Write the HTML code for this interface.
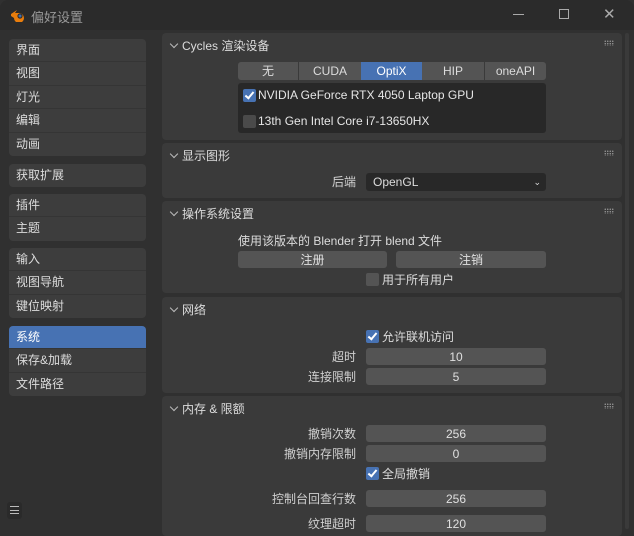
<!DOCTYPE html>
<html><head><meta charset="utf-8"><style>
*{box-sizing:border-box;margin:0;padding:0}
body{width:634px;height:529px;background:#303030;font-family:"Liberation Sans","Noto Sans CJK SC",sans-serif;font-size:12px;color:#dcdcdc;position:relative;overflow:hidden}
.a{position:absolute}
.tb{left:0;top:0;width:634px;height:30px;background:#2b2b2b;border-radius:8px 8px 0 0}
.grp{position:absolute;left:9px;width:137px;background:#3d3d3d;border-radius:4px;overflow:hidden}
.it{height:23.4px;line-height:23px;padding-left:7px;border-bottom:1px solid #353535;font-size:12px}
.it:last-child{border-bottom:none}
.sel{background:#4772b3;color:#fff}
.pn{position:absolute;left:162px;width:460px;background:#3a3a3a;border-radius:4px}
.ph{position:absolute;left:7px;top:4px;font-size:12px}
.ph:before{content:"";display:inline-block;width:5px;height:5px;border-right:1px solid #bbb;border-bottom:1px solid #bbb;transform:rotate(45deg);margin:0 5px 3px 2px}
.dots{position:absolute;right:8px;top:7px;width:10px;height:6px;background-image:radial-gradient(#999 0.6px,transparent 0.8px);background-size:2.5px 2.5px}
.fld{position:absolute;background:#545454;border-radius:3px;text-align:center;line-height:18px;height:17px;color:#e0e0e0}
.lbl{position:absolute;text-align:right;line-height:18px;color:#d0d0d0}
.cb{position:absolute;width:13px;height:13px;border-radius:2px;background:#545454}
.cb.on{background:#4772b3}
.cb.on:after{content:"";position:absolute;left:4px;top:1px;width:3px;height:7px;border-right:2px solid #fff;border-bottom:2px solid #fff;transform:rotate(40deg)}
</style></head><body>
<div class="a tb"></div>
<svg class="a" style="left:10px;top:8px" width="16" height="14" viewBox="0 0 16 14"><path d="M1 6 L7 2 L5 5 L9 5 A5 5 0 1 1 4 10 L1 8 Z" fill="#e87d0d"/><circle cx="10" cy="8" r="2.6" fill="#2b2b2b"/><circle cx="10" cy="8" r="1.5" fill="#3d6fb3"/></svg>
<div class="a" style="left:31px;top:7px;font-size:13px;color:#9a9a9a">偏好设置</div>
<div class="a" style="left:513px;top:14px;width:11px;height:1px;background:#aaa"></div>
<div class="a" style="left:559px;top:9px;width:10px;height:10px;border:1px solid #aaa"></div>
<div class="a" style="left:603px;top:8px;font-size:15px;color:#aaa;line-height:13px">✕</div>

<div class="grp" style="top:39px"><div class="it">界面</div><div class="it">视图</div><div class="it">灯光</div><div class="it">编辑</div><div class="it">动画</div></div>
<div class="grp" style="top:164px"><div class="it">获取扩展</div></div>
<div class="grp" style="top:194px"><div class="it">插件</div><div class="it">主题</div></div>
<div class="grp" style="top:248px"><div class="it">输入</div><div class="it">视图导航</div><div class="it">键位映射</div></div>
<div class="grp" style="top:326px"><div class="it sel">系统</div><div class="it">保存&amp;加载</div><div class="it">文件路径</div></div>
<div class="a" style="left:7px;top:502px;width:15px;height:17px;background:#2a2a2a;border-radius:3px"></div>
<div class="a" style="left:10px;top:506px;width:9px;height:8px;border-top:1px solid #bbb;border-bottom:1px solid #bbb"></div>
<div class="a" style="left:10px;top:510px;width:9px;height:1px;background:#bbb"></div>

<div class="a" style="left:625px;top:33px;width:4px;height:496px;background:#3a3a3a;border-radius:2px"></div>

<div class="pn" style="top:33px;height:107px"><div class="ph">Cycles 渲染设备</div><div class="dots"></div></div>
<div class="a" style="left:238px;top:62px;width:308px;height:18px;background:#545454;border-radius:3px"></div>
<div class="a" style="left:238px;top:62px;width:60px;line-height:18px;text-align:center">无</div>
<div class="a" style="left:298px;top:62px;width:1px;height:18px;background:#3a3a3a"></div>
<div class="a" style="left:299px;top:62px;width:62px;line-height:18px;text-align:center">CUDA</div>
<div class="a" style="left:361px;top:62px;width:61px;height:18px;background:#4772b3;color:#fff;line-height:18px;text-align:center">OptiX</div>
<div class="a" style="left:422px;top:62px;width:62px;line-height:18px;text-align:center">HIP</div>
<div class="a" style="left:484px;top:62px;width:1px;height:18px;background:#3a3a3a"></div>
<div class="a" style="left:485px;top:62px;width:61px;line-height:18px;text-align:center">oneAPI</div>
<div class="a" style="left:238px;top:83px;width:308px;height:50px;background:#282828;border-radius:3px"></div>
<div class="cb on" style="left:243px;top:89px"></div>
<div class="a" style="left:258px;top:88px;color:#e6e6e6">NVIDIA GeForce RTX 4050 Laptop GPU</div>
<div class="cb" style="left:243px;top:115px;background:#4a4a4a"></div>
<div class="a" style="left:258px;top:114px;color:#e6e6e6">13th Gen Intel Core i7-13650HX</div>

<div class="pn" style="top:143px;height:55px"><div class="ph">显示图形</div><div class="dots"></div></div>
<div class="lbl" style="left:300px;top:173px;width:56px">后端</div>
<div class="a" style="left:366px;top:173px;width:180px;height:18px;background:#282828;border-radius:3px;padding-left:7px;line-height:18px">OpenGL<span style="position:absolute;right:5px;top:0;font-size:9px">⌄</span></div>

<div class="pn" style="top:201px;height:92px"><div class="ph">操作系统设置</div><div class="dots"></div></div>
<div class="a" style="left:238px;top:232px">使用该版本的 Blender 打开 blend 文件</div>
<div class="fld" style="left:238px;top:251px;width:149px">注册</div>
<div class="fld" style="left:396px;top:251px;width:150px">注销</div>
<div class="cb" style="left:366px;top:273px"></div>
<div class="a" style="left:382px;top:271px">用于所有用户</div>

<div class="pn" style="top:297px;height:96px"><div class="ph">网络</div></div>
<div class="cb on" style="left:366px;top:330px"></div>
<div class="a" style="left:382px;top:328px">允许联机访问</div>
<div class="lbl" style="left:250px;top:348px;width:106px">超时</div>
<div class="fld" style="left:366px;top:348px;width:180px">10</div>
<div class="lbl" style="left:250px;top:368px;width:106px">连接限制</div>
<div class="fld" style="left:366px;top:368px;width:180px">5</div>

<div class="pn" style="top:396px;height:140px"><div class="ph">内存 &amp; 限额</div><div class="dots"></div></div>
<div class="lbl" style="left:230px;top:425px;width:126px">撤销次数</div>
<div class="fld" style="left:366px;top:425px;width:180px">256</div>
<div class="lbl" style="left:230px;top:445px;width:126px">撤销内存限制</div>
<div class="fld" style="left:366px;top:445px;width:180px">0</div>
<div class="cb on" style="left:366px;top:467px"></div>
<div class="a" style="left:382px;top:465px">全局撤销</div>
<div class="lbl" style="left:230px;top:490px;width:126px">控制台回查行数</div>
<div class="fld" style="left:366px;top:490px;width:180px">256</div>
<div class="lbl" style="left:230px;top:515px;width:126px">纹理超时</div>
<div class="fld" style="left:366px;top:515px;width:180px">120</div>
</body></html>
